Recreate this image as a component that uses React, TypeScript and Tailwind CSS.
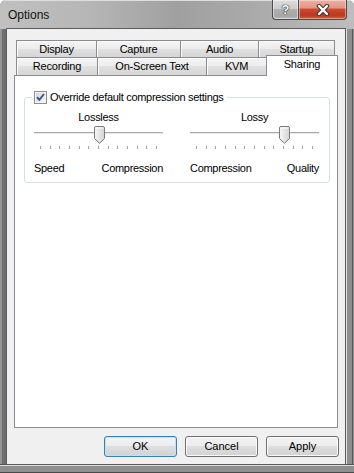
import React from "react";

function Tab({ label, w, last }: { label: string; w: string; last?: boolean }) {
  return (
    <div
      className={`${w} ${last ? "border-r" : ""} h-full flex items-center justify-center border-t border-l border-[#898c95] bg-[linear-gradient(#f4f4f4,#ececec_50%,#e0e0e0_50%,#d6d6d6)] shadow-[inset_1px_1px_0_#fbfbfb] text-[11px] leading-[13px] tracking-[-0.2px]`}
    >
      {label}
    </div>
  );
}

function Thumb() {
  return (
    <svg width="11" height="18" viewBox="0 0 11 18">
      <defs>
        <linearGradient id="thg" x1="0" y1="0" x2="1" y2="0">
          <stop offset="0" stopColor="#f7f7f7" />
          <stop offset="1" stopColor="#d3d3d3" />
        </linearGradient>
      </defs>
      <path
        d="M0.5 2 Q0.5 0.5 2 0.5 H9 Q10.5 0.5 10.5 2 V12.5 L5.5 17.3 L0.5 12.5 Z"
        fill="url(#thg)"
        stroke="#7a7a7a"
      />
      <path d="M1.5 2 H9.5" stroke="#ffffff" strokeWidth="1" />
    </svg>
  );
}

function Slider({ title, value, left, right }: { title: string; value: number; left: string; right: string }) {
  const thumbLeft = 6 + (value * 117) / 12 - 5;
  return (
    <div className="w-[129px] flex flex-col">
      <div className="text-center text-[11px] leading-[13px] tracking-[-0.3px]">{title}</div>
      <div className="relative h-[22px]">
        <div className="mt-[8px] h-[3px] border-t border-[#a9a9a9] bg-[#e6e8e8] border-b border-b-[#ffffff]" />
        <div className="absolute top-[2px]" style={{ left: thumbLeft }}>
          <Thumb />
        </div>
      </div>
      <div className="flex justify-between px-[6px] h-[3px]">
        {Array.from({ length: 13 }).map((_, i) => (
          <div key={i} className="w-px h-[3px] bg-[#a3a3a3]" />
        ))}
      </div>
      <div className="mt-[13px] flex justify-between text-[11px] leading-[13px] tracking-[-0.3px]">
        <span>{left}</span>
        <span>{right}</span>
      </div>
    </div>
  );
}

function Checkbox() {
  return (
    <svg width="13" height="13" viewBox="0 0 13 13" className="shrink-0">
      <defs>
        <linearGradient id="cbg" x1="0" y1="0" x2="1" y2="1">
          <stop offset="0" stopColor="#d3d7dc" />
          <stop offset="1" stopColor="#f7f7f7" />
        </linearGradient>
      </defs>
      <rect x="0.5" y="0.5" width="12" height="12" fill="#f4f4f4" stroke="#8e8f8f" />
      <rect x="2" y="2" width="9" height="9" fill="url(#cbg)" />
      <path d="M3 6.2 L5.4 8.8 L10 3" stroke="#3d5694" strokeWidth="2" fill="none" />
    </svg>
  );
}

function Btn({ label, def }: { label: string; def?: boolean }) {
  return (
    <button
      className={`w-[73px] h-[21px] rounded-[3px] border ${
        def ? "border-[#3c7fb1] shadow-[inset_0_0_0_1px_#bde3f8]" : "border-[#707070] shadow-[inset_0_0_0_1px_#fbfbfb]"
      } bg-[linear-gradient(#f3f3f3,#ececec_50%,#dedede_50%,#d2d2d2)] text-[11px] leading-[13px] text-black flex items-center justify-center`}
    >
      {label}
    </button>
  );
}

export default function App() {
  return (
    <div className="w-[354px] h-[473px] flex flex-col overflow-hidden rounded-t-[6px] font-['Liberation_Sans',Arial,sans-serif] text-black bg-[#9a9a9a]">
      <div className="h-[29px] shrink-0 flex items-start bg-[linear-gradient(to_right,#c0c0c0,#b6b6b6_25%,#a0a0a0_50%,#a9a9a9_70%,#bdbdbd)] shadow-[inset_0_1px_0_#dedede]">
        <div className="pl-[8px] pt-[8px] text-[12px] leading-[14px] text-[#111]">Options</div>
        <div className="ml-auto mr-[7px] flex">
          <div className="w-[27px] h-[20px] rounded-bl-[4px] border border-t-0 border-[#4b4b4b] bg-[linear-gradient(#dcdcdc,#cdcdcd_45%,#aeaeae_50%,#a6a6a6_85%,#bdbdbd)] shadow-[inset_0_0_0_1px_rgba(255,255,255,0.45)] flex items-center justify-center">
            <span className="text-[13px] leading-[13px] font-bold text-white [text-shadow:0_0_1px_#222,0_0_1px_#222,0_0_1px_#222]">?</span>
          </div>
          <div className="w-[48px] h-[20px] rounded-br-[4px] border border-l-0 border-t-0 border-[#4b4b4b] bg-[linear-gradient(#eab1a3,#e29884_40%,#cb4a2f_50%,#bb3820_80%,#d2603d)] shadow-[inset_0_0_0_1px_rgba(255,255,255,0.4)] flex items-center justify-center">
            <svg width="14" height="12" viewBox="0 0 14 12">
              <path d="M3 2 L11 10 M11 2 L3 10" stroke="#3a3a3a" strokeWidth="4.4" strokeLinecap="round" />
              <path d="M3 2 L11 10 M11 2 L3 10" stroke="#ffffff" strokeWidth="2.4" strokeLinecap="round" />
            </svg>
          </div>
        </div>
      </div>
      <div className="flex h-[435px] shrink-0">
        <div className="w-[7px] bg-[linear-gradient(to_right,#959595_0_2px,#6e6e6e_2px)]" />
        <div className="relative z-10 w-[338px] bg-[#f0f0f0] ring-1 ring-[#5b5b5b] flex flex-col pt-[11px]">
          <div className="pl-[9px] flex h-[17px]">
            <Tab label="Display" w="w-[80px]" />
            <Tab label="Capture" w="w-[84px]" />
            <Tab label="Audio" w="w-[78px]" />
            <Tab label="Startup" w="w-[77px]" last />
          </div>
          <div className="pl-[9px] flex items-end h-[18px]">
            <Tab label="Recording" w="w-[81px]" />
            <Tab label="On-Screen Text" w="w-[109px]" />
            <Tab label="KVM" w="w-[60px]" />
            <div className="relative z-10 w-[72px] h-[21px] -mb-px border-t border-l border-r border-[#898c95] bg-white flex justify-center pt-[2px] text-[11px] leading-[13px] tracking-[-0.2px]">
              Sharing
            </div>
          </div>
          <div className="ml-[7px] w-[324px] h-[353px] border border-[#898c95] bg-white">
            <fieldset className="ml-[9px] mt-[15px] w-[306px] border border-[#d5dfe5] rounded-[3px] pl-[7px] pt-[7px] pb-[7px]">
              <legend className="px-[2px] pr-[3px]">
                <div className="flex items-center gap-[3px] h-[13px]">
                  <Checkbox />
                  <span className="text-[11px] leading-[13px] tracking-[-0.3px]">Override default compression settings</span>
                </div>
              </legend>
              <div className="ml-[2px] flex gap-[27px]">
                <Slider title="Lossless" value={6} left="Speed" right="Compression" />
                <Slider title="Lossy" value={9} left="Compression" right="Quality" />
              </div>
            </fieldset>
          </div>
          <div className="mt-[8px] flex justify-end gap-[8px] pr-[6px]">
            <Btn label="OK" def />
            <Btn label="Cancel" />
            <Btn label="Apply" />
          </div>
        </div>
        <div className="w-[9px] bg-[linear-gradient(to_right,#555_0_1px,#e2e2e2_1px_2px,#8f8f8f_2px_7px,#5a5a5a_7px_8px,#8f8f8f_8px)]" />
      </div>
      <div className="h-[9px] shrink-0 bg-[linear-gradient(#555_0_1px,#dcdcdc_1px_2px,#8f8f8f_2px_8px,#4a4a4a_8px)]" />
    </div>
  );
}
